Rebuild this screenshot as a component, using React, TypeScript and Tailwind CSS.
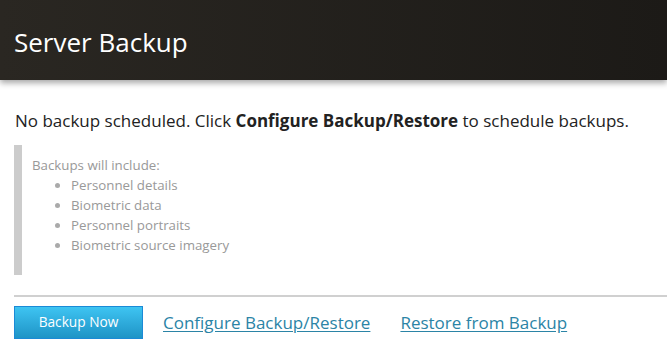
const INCLUDED_ITEMS = [
  "Personnel details",
  "Biometric data",
  "Personnel portraits",
  "Biometric source imagery",
] as const;

export default function App() {
  return (
    <div className="min-h-[362px] w-[667px] overflow-hidden bg-white font-['Open_Sans',sans-serif]">
      <header className="relative flex h-20 items-center bg-gradient-to-r from-[#2a2722] to-[#1c1a17] px-[14px] shadow-[0_3px_6px_rgba(0,0,0,0.35)]">
        <h1 className="pt-1 text-[26px] leading-none text-white">Server Backup</h1>
      </header>

      <main className="pl-[14px] pt-[30px]">
        <p className="pl-px text-[17px] leading-[22px] text-[#222]">
          No backup scheduled. Click <b className="font-bold">Configure Backup/Restore</b> to schedule backups.
        </p>

        <div className="mt-[13px] h-[130px] border-l-8 border-[#cccccc] pl-[10px] pt-[10px] text-[13.3px] leading-5 text-[#999]">
          <div>Backups will include:</div>
          <ul className="list-disc pl-[39px] marker:text-[#aaa]">
            {INCLUDED_ITEMS.map((item) => (
              <li key={item}>{item}</li>
            ))}
          </ul>
        </div>

        <div className="mt-5 border-t-2 border-[#d0d0d0]" />

        <div className="mt-[9px] flex items-center">
          <button className="h-[33px] w-[129px] border border-[#1b8ad6] bg-gradient-to-b from-[#3ec4f2] to-[#1e94c6] text-[13.7px] text-white">
            Backup Now
          </button>
          <a href="#" className="ml-[20px] text-[17px] text-[#2b84a6] underline underline-offset-2">
            Configure Backup/Restore
          </a>
          <a href="#" className="ml-[30px] text-[17px] text-[#2b84a6] underline underline-offset-2">
            Restore from Backup
          </a>
        </div>
      </main>
    </div>
  );
}
